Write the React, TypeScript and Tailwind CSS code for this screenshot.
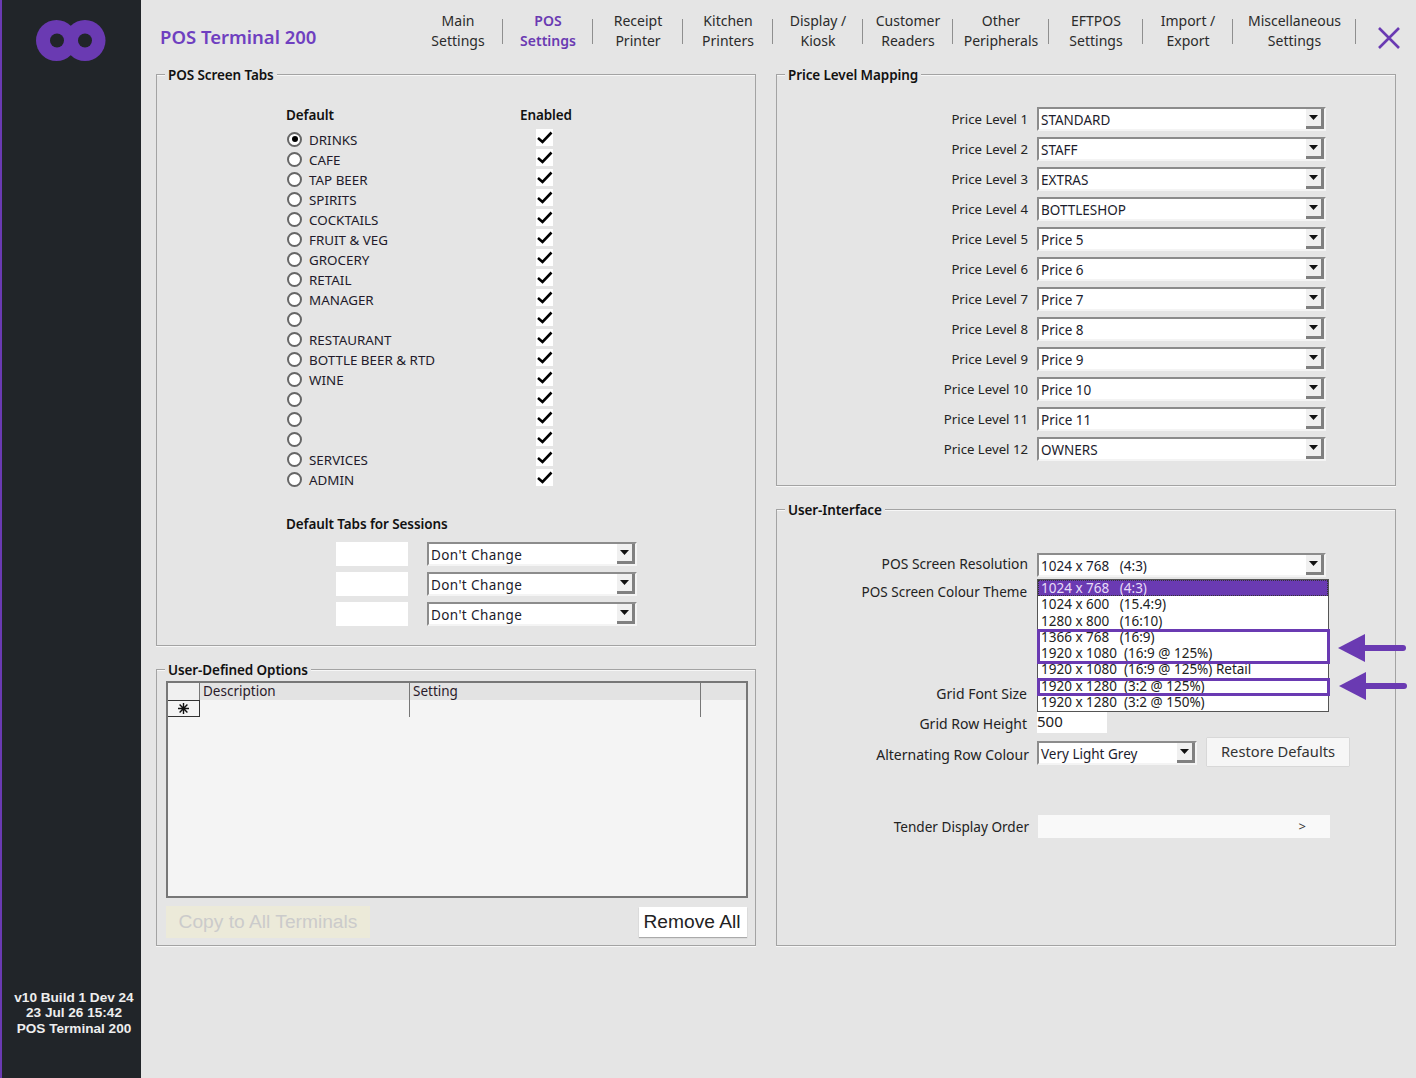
import type { ReactNode } from "react";

const font = "font-['Noto_Sans',sans-serif]";

const tabs = [
  { top: "Main", bottom: "Settings", width: "w-[90px]" },
  { top: "POS", bottom: "Settings", width: "w-[90px]", active: true },
  { top: "Receipt", bottom: "Printer", width: "w-[90px]" },
  { top: "Kitchen", bottom: "Printers", width: "w-[90px]" },
  { top: "Display /", bottom: "Kiosk", width: "w-[90px]" },
  { top: "Customer", bottom: "Readers", width: "w-[90px]" },
  { top: "Other", bottom: "Peripherals", width: "w-[96px]" },
  { top: "EFTPOS", bottom: "Settings", width: "w-[94px]" },
  { top: "Import /", bottom: "Export", width: "w-[90px]" },
  { top: "Miscellaneous", bottom: "Settings", width: "w-[123px]" },
];

const posTabs = [
  "DRINKS", "CAFE", "TAP BEER", "SPIRITS", "COCKTAILS", "FRUIT & VEG", "GROCERY", "RETAIL", "MANAGER",
  "", "RESTAURANT", "BOTTLE BEER & RTD", "WINE", "", "", "", "SERVICES", "ADMIN",
];

const priceLevels = [
  "STANDARD", "STAFF", "EXTRAS", "BOTTLESHOP", "Price 5", "Price 6", "Price 7", "Price 8", "Price 9", "Price 10", "Price 11", "OWNERS",
];

const resolutions = [
  "1024 x 600   (15.4:9)",
  "1280 x 800   (16:10)",
  "1366 x 768   (16:9)",
  "1920 x 1080  (16:9 @ 125%)",
  "1920 x 1080  (16:9 @ 125%) Retail",
  "1920 x 1280  (3:2 @ 125%)",
  "1920 x 1280  (3:2 @ 150%)",
];

function GroupBox({ title, className, children }: { title: string; className: string; children: ReactNode }) {
  return (
    <div className={`relative border border-[#a3a3a3] shadow-[0_1px_0_#f7f7f7,inset_0_1px_0_#f7f7f7] ${className}`}>
      <span className="absolute left-[8px] top-[-9px] bg-[#e5e5e5] px-[3px] text-[13.5px] leading-[18px] font-semibold tracking-[-0.1px] text-[#111]">
        {title}
      </span>
      {children}
    </div>
  );
}

function Combo({ value, className, textClass = "text-[13.5px]" }: { value: string; className: string; textClass?: string }) {
  return (
    <div className={`flex h-[24px] items-stretch border-2 border-t-[#8c8c8c] border-l-[#8c8c8c] border-r-[#f4f4f4] border-b-[#f4f4f4] bg-white ${className}`}>
      <span className={`flex-1 whitespace-pre pl-[2px] leading-[22px] text-[#1c1c2c] ${textClass}`}>{value}</span>
      <span className="flex w-[18px] items-center justify-center border-r-[3px] border-b-[3px] border-[#808080] bg-[#f0f0f0]">
        <svg width="9" height="5" viewBox="0 0 9 5">
          <path d="M0 0h9L4.5 5z" fill="#111" />
        </svg>
      </span>
    </div>
  );
}

function Radio({ checked }: { checked?: boolean }) {
  return (
    <span className="flex size-[15px] shrink-0 items-center justify-center rounded-full border-2 border-[#666] bg-white">
      {checked && <span className="size-[6px] rounded-full bg-black" />}
    </span>
  );
}

function CheckBox() {
  return (
    <span className="-mt-[3px] flex size-[17px] items-center justify-center bg-white">
      <svg width="17" height="17" viewBox="0 0 17 17">
        <path d="M2 9 L6.5 13 L15.5 3.5" fill="none" stroke="#000" strokeWidth="2.6" />
      </svg>
    </span>
  );
}

function Arrow() {
  return (
    <svg width="68" height="28" viewBox="0 0 68 28" className="block">
      <path d="M0 14 L27 0 V28 Z" fill="#6a3ab2" />
      <path d="M24 14 H65" stroke="#6a3ab2" strokeWidth="6" strokeLinecap="round" />
    </svg>
  );
}

function FieldLabel({ children, className }: { children: ReactNode; className: string }) {
  return <div className={`text-right text-[#222] ${className}`}>{children}</div>;
}

export default function App() {
  return (
    <div className={`flex h-[1078px] w-[1416px] overflow-hidden bg-[#e5e5e5] ${font}`}>
      <aside className="flex w-[141px] shrink-0 flex-col items-center justify-between border-l-2 border-[#6a3ab2] bg-[#212529] pt-[20px] pb-[42px]">
        <svg width="70" height="41" viewBox="0 0 70 41" className="mr-[2px]">
          <circle cx="20.5" cy="20.5" r="20.5" fill="#6a3ab2" />
          <circle cx="49" cy="20.5" r="20.5" fill="#6a3ab2" />
          <circle cx="21" cy="20.5" r="7" fill="#212529" />
          <circle cx="49" cy="20.5" r="7" fill="#212529" />
        </svg>
        <div className="ml-[5px] text-center font-['Liberation_Sans',sans-serif] text-[13.6px] leading-[15.5px] font-bold text-[#eee]">
          <div>v10 Build 1 Dev 24</div>
          <div>23 Jul 26 15:42</div>
          <div>POS Terminal 200</div>
        </div>
      </aside>

      <main className="flex flex-1 flex-col pl-[15px]">
        <header className="flex h-[74px] items-start">
          <h1 className="mt-[24px] ml-[4px] w-[253px] shrink-0 text-[18.5px] leading-[26px] font-semibold text-[#6f3fc0]">
            POS Terminal 200
          </h1>
          <nav className="mt-[11px] flex">
            {tabs.map((tab) => (
              <div key={tab.top} className={`relative text-center text-[14px] leading-[20px] ${tab.width} ${tab.active ? "font-semibold text-[#6a3ab2]" : "text-[#2b2b2b]"}`}>
                <div>{tab.top}</div>
                <div>{tab.bottom}</div>
                <span className="absolute top-[8px] right-0 h-[25px] w-px bg-[#8f8f8f]" />
              </div>
            ))}
          </nav>
          <svg width="24" height="24" viewBox="0 0 24 24" className="mt-[26px] ml-[21px]">
            <path d="M2 2 L22 22 M22 2 L2 22" stroke="#6a3ab2" strokeWidth="2.6" />
          </svg>
        </header>

        <div className="flex gap-[20px]">
          <div className="flex w-[600px] flex-col gap-[23px]">
            <GroupBox title="POS Screen Tabs" className="h-[572px]">
              <div className="mt-[30px] ml-[129px] flex text-[13.5px] font-semibold tracking-[-0.1px] text-[#111]">
                <span className="w-[234px]">Default</span>
                <span>Enabled</span>
              </div>
              <div className="mt-[4px] ml-[130px] flex flex-col">
                {posTabs.map((name, i) => (
                  <div key={i} className="flex h-[20px] items-center">
                    <Radio checked={i === 0} />
                    <span className="ml-[7px] w-[227px] pt-[2px] text-[13.4px] leading-[20px] text-[#221a2a]">{name}</span>
                    <CheckBox />
                  </div>
                ))}
              </div>
              <div className="mt-[25px] ml-[129px] text-[13.5px] font-semibold tracking-[-0.1px] text-[#111]">Default Tabs for Sessions</div>
              <div className="mt-[7px] ml-[179px] flex flex-col gap-[6px]">
                {[0, 1, 2].map((i) => (
                  <div key={i} className="flex gap-[19px]">
                    <span className="h-[24px] w-[72px] bg-white" />
                    <Combo value="Don't Change" className="w-[210px]" textClass="text-[13.5px] tracking-[0.4px]" />
                  </div>
                ))}
              </div>
            </GroupBox>

            <GroupBox title="User-Defined Options" className="flex h-[277px] flex-col pt-[11px] pl-[9px]">
              <div className="h-[217px] w-[582px] border-2 border-[#777] bg-[#f4f4f4]">
                <div className="flex h-[17px] bg-[#e3e3e3] text-[13.5px] leading-[17px] text-[#2a1a2a]">
                  <span className="w-[32px] border-r border-[#777] bg-[#f0f0f0]" />
                  <span className="w-[210px] border-r border-[#777] pl-[3px]">Description</span>
                  <span className="w-[291px] border-r border-[#777] pl-[3px]">Setting</span>
                </div>
                <div className="flex h-[17px]">
                  <span className="flex w-[32px] items-center justify-center border-y border-r border-[#333] bg-[#f4f4f4]">
                    <svg width="13" height="13" viewBox="0 0 13 13">
                      <path d="M6.5 1V12M1 6.5H12M2.6 2.6L10.4 10.4M10.4 2.6L2.6 10.4" stroke="#111" strokeWidth="1.4" />
                    </svg>
                  </span>
                  <span className="w-[210px] border-r border-[#777]" />
                  <span className="w-[291px] border-r border-[#777]" />
                </div>
              </div>
              <div className="mt-[8px] flex w-[582px] items-center justify-between font-['Liberation_Sans',sans-serif] text-[19.2px]">
                <span className="flex h-[32px] w-[204px] items-center justify-center bg-[#ecead9] text-[#cbcbcb]">Copy to All Terminals</span>
                <span className="mr-[1px] flex h-[30px] w-[108px] items-center justify-center bg-white pr-[2px] text-[#222] shadow-[0_1px_1px_#aaa]">Remove All</span>
              </div>
            </GroupBox>
          </div>

          <div className="flex w-[620px] flex-col gap-[23px]">
            <GroupBox title="Price Level Mapping" className="h-[412px]">
              <div className="mt-[32px] flex flex-col gap-[6px]">
                {priceLevels.map((value, i) => (
                  <div key={value} className="flex items-center gap-[9px]">
                    <FieldLabel className="w-[251px] pt-[2px] text-[13.2px]">Price Level {i + 1}</FieldLabel>
                    <Combo value={value} className="w-[289px]" />
                  </div>
                ))}
              </div>
            </GroupBox>

            <GroupBox title="User-Interface" className="h-[437px] text-[14px]">
              <div className="mt-[43px] flex items-center gap-[9px]">
                <FieldLabel className="w-[251px] pb-[2px] text-[13.8px]">POS Screen Resolution</FieldLabel>
                <Combo value="1024 x 768   (4:3)" className="w-[289px]" />
              </div>
              <div className="mt-[5px] flex h-[20px] items-center">
                <FieldLabel className="w-[250px] text-[13.5px]">POS Screen Colour Theme</FieldLabel>
              </div>
              <div className="mt-[81px] flex h-[20px] items-center">
                <FieldLabel className="w-[250px]">Grid Font Size</FieldLabel>
              </div>
              <div className="mt-[7px] flex h-[24px] items-center gap-[10px]">
                <FieldLabel className="w-[250px] pt-[2px]">Grid Row Height</FieldLabel>
                <span className="h-[22px] w-[70px] bg-white text-[15px] leading-[20px] text-[#222]">500</span>
              </div>
              <div className="mt-[4px] flex items-center">
                <FieldLabel className="mt-[5px] w-[252px]">Alternating Row Colour</FieldLabel>
                <Combo value="Very Light Grey" className="mt-[2px] ml-[8px] w-[160px]" />
                <span className="ml-[10px] flex h-[28px] w-[142px] items-center justify-center bg-[#f6f6f6] pb-[2px] text-[14.7px] text-[#333] shadow-[0_0_1px_#999]">
                  Restore Defaults
                </span>
              </div>
              <div className="mt-[49px] flex items-center">
                <FieldLabel className="w-[252px] pt-[2px] text-[13.6px]">Tender Display Order</FieldLabel>
                <span className="ml-[9px] flex h-[23px] w-[292px] items-center justify-end bg-[#f9f9f9] pr-[24px] text-[13px] text-[#333]">&gt;</span>
              </div>

              {/* dropdown open over the form, with the purple callouts on top */}
              <div className="absolute top-[69px] left-[260px] h-[133px] w-[292px] border border-[#555] bg-white text-[13.5px] leading-[16.3px] whitespace-pre text-[#222]">
                <div className="h-[16.3px] bg-[#6a3ab2] pl-[3px] text-[#e8dcf8] outline-1 -outline-offset-1 outline-dotted outline-[#333]">1024 x 768   (4:3)</div>
                {resolutions.map((r) => (
                  <div key={r} className="h-[16.3px] pl-[3px]">{r}</div>
                ))}
              </div>
              <div className="absolute top-[119px] left-[260px] h-[35px] w-[293px] border-[3px] border-[#6a3ab2]" />
              <div className="absolute top-[168px] left-[260px] h-[18px] w-[293px] border-[3px] border-[#6a3ab2]" />
              <div className="absolute top-[124px] left-[561px]"><Arrow /></div>
              <div className="absolute top-[162px] left-[562px]"><Arrow /></div>
            </GroupBox>
          </div>
        </div>
      </main>
    </div>
  );
}
